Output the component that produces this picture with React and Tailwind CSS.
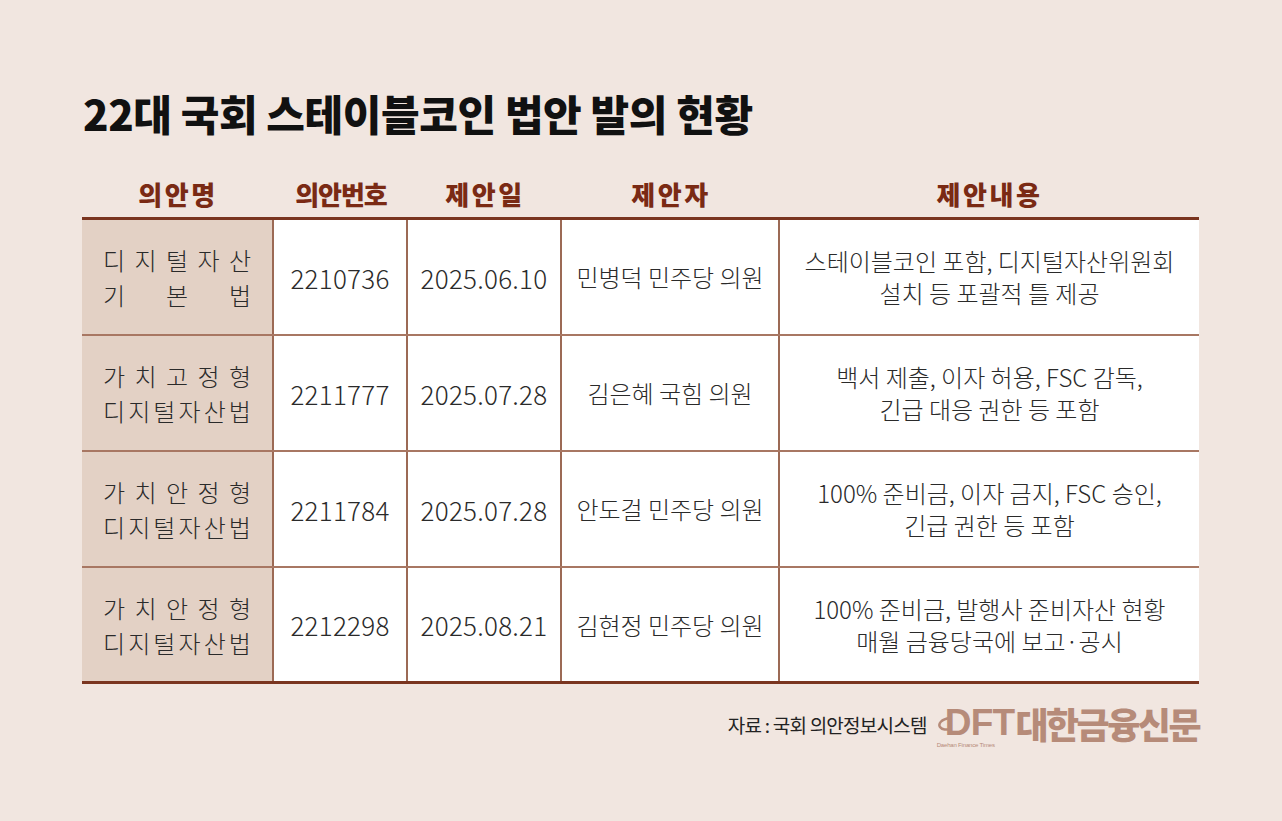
import React from "react";

const rows = [
  {
    name: [["디", "지", "털", "자", "산"], ["기", "본", "법"]],
    no: "2210736",
    date: "2025.06.10",
    who: "민병덕 민주당 의원",
    body: ["스테이블코인 포함, 디지털자산위원회", "설치 등 포괄적 틀 제공"],
  },
  {
    name: [["가", "치", "고", "정", "형"], ["디", "지", "털", "자", "산", "법"]],
    no: "2211777",
    date: "2025.07.28",
    who: "김은혜 국힘 의원",
    body: ["백서 제출, 이자 허용, FSC 감독,", "긴급 대응 권한 등 포함"],
  },
  {
    name: [["가", "치", "안", "정", "형"], ["디", "지", "털", "자", "산", "법"]],
    no: "2211784",
    date: "2025.07.28",
    who: "안도걸 민주당 의원",
    body: ["100% 준비금, 이자 금지, FSC 승인,", "긴급 권한 등 포함"],
  },
  {
    name: [["가", "치", "안", "정", "형"], ["디", "지", "털", "자", "산", "법"]],
    no: "2212298",
    date: "2025.08.21",
    who: "김현정 민주당 의원",
    body: ["100% 준비금, 발행사 준비자산 현황", "매월 금융당국에 보고·공시"],
  },
];

const cols = "grid grid-cols-[192px_134px_154px_218px_419px]";

const App = () => {
  return (
    <div
      className="min-h-[821px] w-full bg-[#f1e6e0] text-[#2a2a2a]"
      style={{ fontFamily: '"Noto Sans CJK KR", "Noto Sans", sans-serif' }}
    >
      <div className="pl-[83px] pt-[92px]">
        <h1 className="text-[42px] font-black leading-none tracking-[-0.01em] text-[#111]">
          22대 국회 스테이블코인 법안 발의 현황
        </h1>
      </div>

      <div className="ml-[82px] mt-[35px] w-[1117px]">
        {/* header */}
        <div className={`${cols} h-[48px] items-center text-[26px] font-black text-[#7a2a14]`}>
          <div className="text-center tracking-[0.1em]">의안명</div>
          <div className="text-center tracking-[-0.04em]">의안번호</div>
          <div className="text-center tracking-[0.1em]">제안일</div>
          <div className="text-center tracking-[0.1em]">제안자</div>
          <div className="text-center tracking-[0.1em]">제안내용</div>
        </div>

        <div className="border-t-[3px] border-[#7a3520]">
          {rows.map((r, i) => (
            <div
              key={r.no}
              className={`${cols} h-[116px] ${
                i === rows.length - 1
                  ? "border-b-[3px] border-[#7a3520]"
                  : "border-b-2 border-[#a87763]"
              }`}
            >
              <div className="flex flex-col items-center justify-center border-r-2 border-[#9c6a55] bg-[#e3d1c5] text-[24px] font-light leading-[35px]">
                {r.name.map((line, j) => (
                  <div key={j} className="flex w-[148px] justify-between">
                    {line.map((ch, k) => (
                      <span key={k}>{ch}</span>
                    ))}
                  </div>
                ))}
              </div>
              <div className="flex items-center justify-center border-r-2 border-[#9c6a55] bg-white text-[26px] font-light tracking-[0.01em]">
                {r.no}
              </div>
              <div className="flex items-center justify-center border-r-2 border-[#9c6a55] bg-white text-[26px] font-light tracking-[0.01em]">
                {r.date}
              </div>
              <div className="flex items-center justify-center border-r-2 border-[#9c6a55] bg-white text-[24px] font-light">
                {r.who}
              </div>
              <div className="flex flex-col items-center justify-center bg-white text-[24px] font-light leading-[32px]">
                {r.body.map((t) => (
                  <div key={t}>{t}</div>
                ))}
              </div>
            </div>
          ))}
        </div>

        {/* footer */}
        <div className="mt-[20px] flex items-center justify-end gap-[10px]">
          <span className="text-[19px] tracking-[-0.04em] text-[#222]">자료 : 국회 의안정보시스템</span>
          <div className="relative flex items-center pb-[6px] text-[#b68b79]">
            <svg width="14" height="20" viewBox="0 0 14 20" className="mr-[-6px] mt-[2px]">
              <path d="M13 4 C4 5 1 10 3 13 C5 16 10 16 13 15" fill="none" stroke="#b68b79" strokeWidth="2.5" strokeLinecap="round" />
            </svg>
            <span className="text-[37px] font-black leading-none tracking-[-0.02em]" style={{ fontFamily: '"Liberation Sans", sans-serif' }}>
              DFT
            </span>
            <span className="ml-[1px] text-[36px] font-black leading-none tracking-[-0.07em]">대한금융신문</span>
            <span className="absolute bottom-[-1px] left-0 text-[6px] leading-none tracking-[-0.03em]" style={{ fontFamily: '"Liberation Sans", sans-serif' }}>
              Daehan Finance Times
            </span>
          </div>
        </div>
      </div>
    </div>
  );
};

export default App;
